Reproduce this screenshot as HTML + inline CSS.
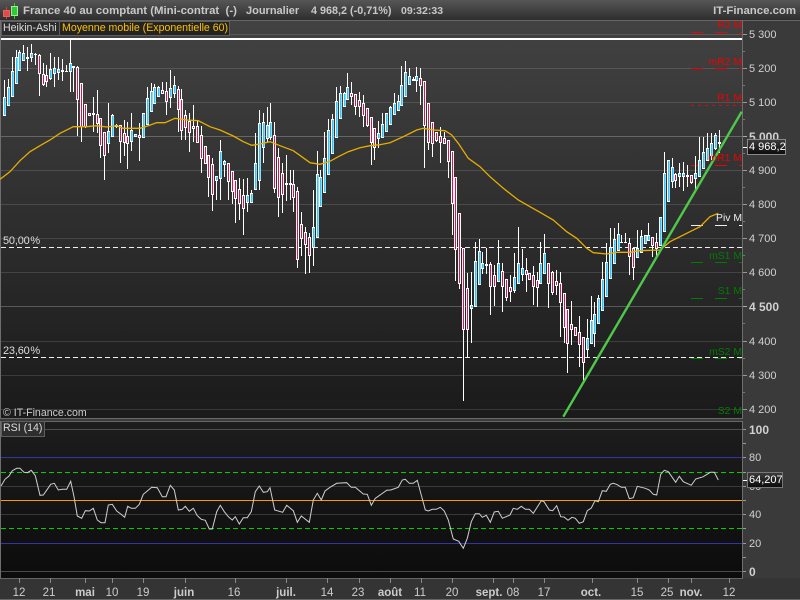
<!DOCTYPE html>
<html><head><meta charset="utf-8"><title>France 40</title>
<style>
html,body{margin:0;padding:0;background:#3a3a3a;width:800px;height:600px;overflow:hidden}
body{position:relative;font-family:"Liberation Sans",sans-serif}
#title{position:absolute;left:0;top:0;width:800px;height:20px;background:linear-gradient(#565656,#2e2e2e);border-bottom:1px solid #666}
#main{position:absolute;left:0;top:21px;width:742px;height:398px;background:linear-gradient(#424242,#1a1a1a)}
#rsi{position:absolute;left:0;top:421px;width:742px;height:157px;background:linear-gradient(#1d1d1d,#0c0c0c)}
#bot{position:absolute;left:0;top:578px;width:800px;height:22px;background:#343434}
svg{position:absolute;left:0;top:0}
.t{position:absolute;white-space:pre;line-height:14px;font-size:11px;color:#ccc}
.b{font-weight:bold}
.h{font-weight:bold;font-size:11.4px;color:#c8c8c8;top:4px}
.y{left:749px;color:#d0d0d0}
.p{right:58px;font-size:10.4px}
.r{color:#f00000}.g{color:#007d00}
.x{top:586px;transform:translateX(-50%);font-size:11.5px}
.box{position:absolute;background:linear-gradient(#3a3a3a,#0c0c0c);border:1px solid #8a8a8a;color:#fff;font-size:11px;line-height:14px;white-space:pre}
.lab{position:absolute;background:#333;border:1px solid #5e5e5e;color:#ddd;font-size:10.6px;line-height:13px;white-space:pre}
.f{word-spacing:-2px;letter-spacing:-0.2px;color:#ddd}
</style></head><body>
<div id="main"></div><div id="rsi"></div><div id="bot"></div><div id="title"></div>
<svg id="s" width="800" height="600" viewBox="0 0 800 600"></svg>

<div class="t h" style="left:23px">France 40 au comptant (Mini-contrat  (-)</div>
<div class="t h" style="left:246px;font-size:11px">Journalier</div>
<div class="t h" style="left:311px;font-size:10.8px">4 968,2 (-0,71%)</div>
<div class="t h" style="left:401px;font-size:10.5px">09:32:33</div>
<div class="t h" style="right:4px">IT-Finance.com</div>

<div class="lab" style="left:1px;top:21px;width:56px;height:13px;padding-left:1px;background:#2c2c2c">Heikin-Ashi</div>
<div class="lab" style="left:59px;top:21px;width:167px;height:13px;padding-left:2px;background:#232323;color:#ffc000">Moyenne mobile (Exponentielle 60)</div>
<div class="lab" style="left:1px;top:421px;width:41px;height:13px;padding-left:1px;padding-bottom:1px;background:#2e2e2e">RSI (14)</div>

<div class="t f" style="left:3px;top:234px">50,00 %</div>
<div class="t f" style="left:3px;top:344px">23,60 %</div>
<div class="t" style="left:3px;top:406px;font-size:10.6px">© IT-Finance.com</div>

<div class="t p r" style="top:19px">R2 M</div>
<div class="t p r" style="top:56px">mR2 M</div>
<div class="t p r" style="top:92px">R1 M</div>
<div class="t p r" style="top:152px">mR1 M</div>
<div class="t p" style="top:212px;color:#eee">Piv M</div>
<div class="t p g" style="top:250px">mS1 M</div>
<div class="t p g" style="top:285px">S1 M</div>
<div class="t p g" style="top:346px">mS2 M</div>
<div class="t p g" style="top:405px">S2 M</div>

<div class="t y" style="top:28px">5 300</div>
<div class="t y" style="top:62px">5 200</div>
<div class="t y" style="top:96px">5 100</div>
<div class="t y b" style="top:130px;font-size:12px">5 000</div>
<div class="t y" style="top:164px">4 900</div>
<div class="t y" style="top:198px">4 800</div>
<div class="t y" style="top:232px">4 700</div>
<div class="t y" style="top:266px">4 600</div>
<div class="t y b" style="top:300px;font-size:12px">4 500</div>
<div class="t y" style="top:335px">4 400</div>
<div class="t y" style="top:369px">4 300</div>
<div class="t y" style="top:403px">4 200</div>
<div class="box" style="left:747px;top:139px;width:36px;height:14px;padding-left:1px">4 968,2</div>

<div class="t y b" style="top:423px;font-size:12px">100</div>
<div class="t y" style="top:451px">80</div>
<div class="t y" style="top:480px">60</div>
<div class="t y" style="top:508px">40</div>
<div class="t y" style="top:537px">20</div>
<div class="t y b" style="top:565px;font-size:12px">0</div>
<div class="box" style="left:747px;top:472px;width:33px;height:14px;padding-left:1px;border-color:#777">64,207</div>

<div class="t x" style="left:19px">12</div>
<div class="t x" style="left:49px">21</div>
<div class="t x b" style="left:85px">mai</div>
<div class="t x" style="left:112px">10</div>
<div class="t x" style="left:143px">19</div>
<div class="t x b" style="left:184px">juin</div>
<div class="t x" style="left:234px">16</div>
<div class="t x b" style="left:286px">juil.</div>
<div class="t x" style="left:327px">14</div>
<div class="t x" style="left:358px">23</div>
<div class="t x b" style="left:390px">août</div>
<div class="t x" style="left:420px">11</div>
<div class="t x" style="left:452px">20</div>
<div class="t x b" style="left:489px">sept.</div>
<div class="t x" style="left:513px">08</div>
<div class="t x" style="left:544px">17</div>
<div class="t x b" style="left:591px">oct.</div>
<div class="t x" style="left:637px">15</div>
<div class="t x" style="left:667px">25</div>
<div class="t x b" style="left:691px">nov.</div>
<div class="t x" style="left:729px">12</div>

<script>
var C=[[13,240,345,290,345,1],[25,237,318,260,316,1],[37,172,290,214,288,1],[49,150,250,170,250,1],[58,150,212,155,210,1],[70,135,182,158,180,1],[82,140,212,172,173,1],[94,132,185,160,172,1],[106,160,195,162,163,1],[118,162,288,166,220,0],[130,190,258,222,253,0],[139,195,262,224,242,0],[151,160,240,208,234,1],[163,172,262,205,220,1],[175,172,240,208,215,1],[187,178,242,211,212,1],[199,195,215,212,213,1],[211,118,275,190,212,1],[220,198,275,199,200,1],[232,198,408,200,298,0],[244,250,425,250,378,0],[256,312,385,313,378,0],[268,338,345,340,346,0],[280,290,395,340,342,1],[292,270,400,343,368,0],[301,355,475,355,436,0],[313,395,540,397,466,0],[325,310,458,392,430,1],[337,342,410,345,408,1],[349,372,385,375,378,1],[361,375,490,376,424,0],[373,360,468,400,427,0],[382,365,508,408,428,0],[394,340,452,390,422,1],[406,403,407,403,407,1],[418,370,482,405,412,0],[430,340,410,340,410,1],[442,262,375,295,373,1],[454,250,335,272,334,1],[463,252,310,262,308,1],[475,258,290,262,288,1],[487,245,280,271,278,0],[499,245,345,274,304,0],[511,210,325,265,290,1],[523,228,295,256,278,1],[535,258,395,268,328,0],[544,268,420,297,390,0],[556,330,420,345,382,0],[568,340,455,362,395,0],[580,315,425,378,384,0],[592,360,430,378,425,0],[604,378,520,405,475,0],[616,438,490,438,490,0],[625,465,590,466,532,0],[637,475,632,492,582,0],[649,528,600,528,540,1],[661,420,600,452,535,1],[673,480,530,484,492,1],[685,490,600,490,542,0],[697,512,612,514,572,0],[706,540,668,541,595,0],[718,535,660,568,608,0],[730,538,704,585,625,0],[742,535,636,585,605,1],[754,570,606,578,605,1],[766,400,570,490,568,1],[778,330,570,370,540,1],[790,340,490,367,440,1],[802,320,430,375,415,1],[812,310,420,365,410,1],[824,365,580,405,563,0],[836,445,650,470,590,0],[848,490,638,518,583,0],[859,465,603,550,552,1],[871,510,600,550,552,1],[880,510,636,552,592,0],[892,560,804,572,776,0],[904,637,768,673,715,0],[916,682,822,695,731,0],[928,700,818,712,764,0],[940,570,797,682,740,1],[952,453,710,522,710,1],[961,510,620,532,617,1],[973,395,575,475,575,1],[985,357,523,390,523,1],[997,342,458,358,458,1],[1009,260,410,304,410,1],[1021,258,355,280,355,1],[1033,275,318,278,317,1],[1042,220,298,262,298,1],[1054,245,315,280,287,0],[1066,283,345,283,317,0],[1078,275,350,300,318,0],[1090,285,382,310,345,0],[1102,324,380,324,374,0],[1114,350,495,350,425,0],[1123,385,480,385,442,0],[1135,362,445,400,415,1],[1147,340,410,373,410,1],[1159,338,392,340,392,1],[1171,318,372,320,372,1],[1183,278,343,310,343,1],[1195,285,330,303,330,1],[1204,197,315,255,315,1],[1216,183,288,216,288,1],[1228,205,255,228,252,1],[1240,232,242,238,240,1],[1249,202,275,228,240,1],[1261,204,315,235,254,0],[1273,243,505,243,375,0],[1285,310,450,310,425,0],[1297,367,470,367,430,0],[1309,395,425,397,420,0],[1321,380,490,408,425,0],[1333,395,430,415,428,0],[1345,420,535,420,482,0],[1357,452,705,452,610,0],[1366,530,842,530,748,0],[1378,640,868,640,848,0],[1390,745,1202,745,988,0],[1402,820,1072,865,986,0],[1414,816,1028,915,925,1],[1426,726,919,784,919,1],[1438,718,853,752,853,1],[1447,756,823,790,803,1],[1459,744,822,793,796,1],[1471,786,945,793,857,0],[1483,795,918,826,857,0],[1495,721,842,790,842,1],[1507,790,935,813,857,0],[1519,836,903,836,892,0],[1531,825,905,862,872,0],[1543,760,878,830,870,1],[1555,682,848,790,848,1],[1567,748,842,805,821,1],[1579,775,875,811,821,0],[1588,818,840,818,836,0],[1600,798,915,826,857,0],[1612,816,920,841,860,0],[1621,725,850,790,850,1],[1633,702,820,760,820,1],[1645,790,925,790,850,0],[1657,812,885,815,875,0],[1669,810,885,842,855,0],[1681,815,1010,850,905,0],[1693,878,1030,878,980,0],[1702,928,1118,928,1030,0],[1714,903,1035,973,988,0],[1726,980,1008,980,1005,0],[1738,948,1100,995,1033,0],[1750,1012,1145,1012,1085,0],[1762,958,1075,1015,1048,1],[1774,888,1030,960,1030,1],[1783,905,1040,943,998,1],[1795,885,970,895,970,1],[1807,785,930,838,930,1],[1819,730,887,785,887,1],[1831,685,835,742,835,1],[1843,685,790,718,790,1],[1855,670,750,703,750,1],[1864,705,727,725,727,1],[1876,700,725,725,727,1],[1888,715,825,728,767,0],[1900,745,840,745,800,0],[1912,690,772,743,772,1],[1924,690,756,707,756,1],[1936,706,730,706,730,1],[1945,670,720,706,720,1],[1957,712,770,712,735,0],[1969,700,770,725,745,0],[1981,650,735,652,735,1],[1993,456,692,518,692,1],[2005,480,604,480,604,1],[2017,475,565,502,542,1],[2026,520,565,522,540,0],[2038,490,560,520,528,1],[2050,487,572,520,528,1],[2062,495,560,524,527,1],[2074,526,552,526,545,0],[2086,468,570,520,535,1],[2098,412,527,480,527,1],[2110,412,505,457,505,1],[2122,398,480,445,480,1],[2134,398,480,430,465,1],[2146,400,450,405,445,1],[2158,390,460,425,428,1]];
function pts(a,ox,oy){var r=[];for(var i=0;i<a.length;i+=2)r.push(((a[i]+ox)/3).toFixed(1)+','+((a[i+1]+oy)/3).toFixed(1));return r.join(' ');}
var ma=[0,538,30,515,60,482,90,455,120,437,150,420,180,400,220,380,260,380,290,377,320,381,350,377,370,385,420,385,445,377,470,368,495,368,525,355,560,360,595,362,630,380,660,390,700,408,730,425,755,436,780,432,810,425,840,437,880,452,905,470,930,488,960,493,990,484,1015,470,1045,455,1080,443,1110,437,1140,434,1170,428,1210,410,1250,390,1270,385,1300,390,1335,392,1355,405,1375,430,1405,475,1440,500,1470,530,1510,565,1555,600,1590,620,1620,637,1660,660,1700,695,1730,715,1760,745,1780,758,1820,762,1850,757,1890,757,1920,752,1980,750,2010,725,2060,700,2100,680,2130,650,2155,640];
var rs=[3,228,15,208,27,198,37,182,50,175,60,175,72,187,82,188,94,181,106,197,120,256,130,255,142,238,152,223,163,220,175,240,187,238,200,238,212,214,222,260,232,318,245,325,256,302,268,303,280,295,292,330,303,338,315,338,325,285,337,283,350,303,362,312,374,322,383,289,394,295,406,295,418,283,430,253,442,243,455,232,472,233,487,260,498,260,511,226,523,240,535,300,547,298,556,289,568,304,580,295,592,317,604,328,616,331,628,357,637,357,650,305,661,286,673,305,685,320,697,330,706,320,718,342,730,323,742,323,754,305,766,245,778,228,790,247,802,245,810,233,824,300,848,307,860,286,880,302,892,337,904,318,928,337,940,270,952,250,964,270,975,243,990,232,1010,220,1040,218,1054,232,1066,232,1090,252,1102,253,1114,286,1126,265,1160,241,1172,240,1195,232,1207,210,1216,208,1228,220,1240,220,1252,211,1276,300,1285,303,1297,298,1309,298,1321,292,1333,303,1345,330,1360,387,1376,394,1390,415,1402,385,1414,335,1426,311,1438,311,1447,322,1459,316,1471,337,1483,306,1495,304,1507,325,1530,315,1540,295,1552,298,1564,289,1576,298,1588,298,1600,310,1624,272,1632,275,1648,300,1658,302,1670,287,1682,320,1692,321,1704,331,1716,322,1726,325,1738,340,1750,335,1762,302,1774,294,1785,272,1795,275,1807,242,1819,244,1831,223,1840,220,1852,224,1864,232,1876,232,1888,266,1900,263,1912,229,1924,232,1936,235,1948,240,1960,253,1970,255,1982,193,1993,181,2005,185,2027,217,2038,199,2050,215,2074,226,2087,207,2110,200,2131,187,2143,187,2155,210];
var h='';
function R(x,y,w,he,c){h+='<rect x="'+x+'" y="'+y+'" width="'+w+'" height="'+he+'" fill="'+c+'"/>';}
function L(x1,y1,x2,y2,c,d){h+='<line x1="'+x1+'" y1="'+y1+'" x2="'+x2+'" y2="'+y2+'" stroke="'+c+'"'+(d?' stroke-dasharray="'+d+'"':'')+'/>';}
h+='<g shape-rendering="crispEdges">';
R(0,20,1,399,'#6e6e6e');R(0,418,743,1,'#6a6a6a');R(742,20,1,399,'#6e6e6e');
R(0,421,743,1,'#666');R(0,421,1,158,'#6e6e6e');R(742,421,1,158,'#6e6e6e');R(0,578,743,1,'#666');R(0,599,800,1,'#666');
var gy=[34,68,102,136,170,204,238,272,306,341,375,409];
gy.forEach(function(y,i){var b=(i==3||i==8);var o=b?0.24:0.13;R(1,y,741,1,'rgba(255,255,255,'+o+')');R(743,y,4,1,b?'#aaa':'#999');});
for(var i=0;i<11;i++){R(743,gy[i]+17,2,1,'#777');}
[[429,'#4d4d4d'],[486,'#3a3a3a'],[514,'#383838'],[571,'#4a4a4a']].forEach(function(a){R(1,a[0],741,1,a[1]);});
R(1,457,741,1,'#3434a8');R(1,543,741,1,'#3434a8');
[429,443,457,472,486,500,514,528,543,557,571].forEach(function(y){R(743,y,3,1,'#999');});
[19,50,85,112,143,185,235,286,327,359,390,421,452,493,513,544,592,637,668,691,729].forEach(function(x){R(x,578,1,5,'#8a8a8a');});
R(1,38,741,2,'#fff');
L(1,247.5,742,247.5,'#f0f0f0','5 3');L(1,357.5,742,357.5,'#f0f0f0','5 3');
function piv(y,c){R(691,y,12,1,c);R(715,y,12,1,c);R(739,y,3,1,c);}
piv(32,'#f00000');piv(68,'#f00000');piv(165,'#f00000');piv(225,'#eee');piv(262,'#007d00');piv(298,'#007d00');piv(358,'#007d00');
L(691,105.5,742,105.5,'#d01010','3 4');
L(1,472.5,742,472.5,'#00d000','5 3');L(1,528.5,742,528.5,'#00d000','5 3');R(1,500,741,1,'#ff9900');
R(743,147,4,1,'#fff');R(743,480,4,1,'#fff');
// icon
R(6,7,1,12,'#d84040');R(3,10,7,7,'#e86060');R(4,11,5,5,'#e04a4a');
R(14,3,1,16,'#2ecc2e');R(11,6,7,10,'#9fe89f');R(12,7,5,8,'#2ecc2e');
// candles
C.forEach(function(c){var x=Math.floor(c[0]/3),hi=Math.round(c[1]/3),lo=Math.round(c[2]/3),t=Math.round(c[3]/3),b=Math.round(c[4]/3),u=c[5];
R(x,hi,1,Math.max(lo-hi,1),'#fff');
var bh=b-t;
if(bh<=1){R(x-1,t,3,Math.max(bh+1,1),'#fff');return;}
R(x-1,t,3,bh+1,'#fff');
if(u){R(x,t+1,1,bh-1,'#35c4f4');R(x+1,t+1,1,bh-1,'#8fdcf8');} else {R(x,t+1,1,bh-1,'#e0104c');}
});
h+='</g>';
h+='<polyline points="'+pts(ma,0,0)+'" fill="none" stroke="#e6ae00" stroke-width="1.3"/>';
h+='<line x1="563.3" y1="416.7" x2="741.7" y2="111.7" stroke="#4ec94a" stroke-width="2.4"/>';
h+='<polyline points="'+pts(rs,0,1230)+'" fill="none" stroke="#cfcfcf" stroke-width="1"/>';
document.getElementById('s').innerHTML=h;
</script>
</body></html>
